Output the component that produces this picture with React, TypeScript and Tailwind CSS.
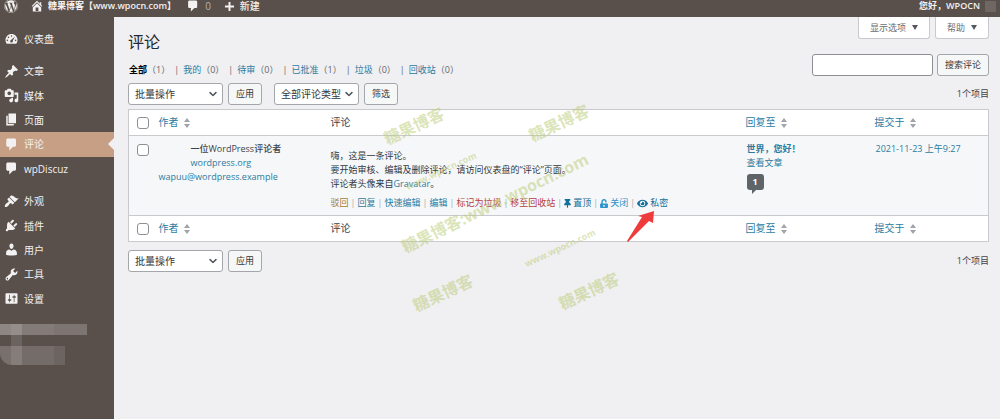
import React, { type ReactNode } from 'react';
import { FaEye, FaThumbtack, FaUnlockAlt, FaWordpress } from 'react-icons/fa';

const ICONS = {
  dashboard:
    'M3.76 17h12.48c1.1-1.37 1.76-3.11 1.76-5 0-4.42-3.58-8-8-8s-8 3.58-8 8c0 1.89.66 3.63 1.76 5zM10 5.5c.6 0 1 .45 1 1s-.4 1-1 1-1-.45-1-1 .4-1 1-1zM6 7.3c.6 0 1.1.45 1.1 1.1S6.6 9.5 6 9.5s-1.1-.5-1.1-1.1S5.4 7.3 6 7.3zm8.6.1L11.7 13c.4 1.1-.4 2.4-1.7 2.4s-2.1-1.3-1.6-2.5c.2-.5.6-.8 1-.9zM4.5 11.3c.6 0 1.1.45 1.1 1.1s-.5 1.1-1.1 1.1-1.1-.5-1.1-1.1.5-1.1 1.1-1.1zm11 0c.6 0 1.1.45 1.1 1.1s-.5 1.1-1.1 1.1-1.1-.5-1.1-1.1.5-1.1 1.1-1.1z',
  post: 'M10.44 3.02l1.82-1.82 6.36 6.35-1.83 1.82c-1.05-.68-2.48-.57-3.41.36l-.75.75c-.92.93-1.04 2.35-.35 3.41l-1.83 1.82-2.41-2.41-2.8 2.79c-.42.42-3.38 2.71-3.8 2.29s1.86-3.39 2.28-3.81l2.79-2.79L4.1 9.36l1.83-1.82c1.05.69 2.48.57 3.4-.36l.75-.75c.93-.92 1.05-2.35.36-3.41z',
  media:
    'M13 11V4c0-.55-.45-1-1-1h-1.67L9 1H5L3.67 3H2c-.55 0-1 .45-1 1v7c0 .55.45 1 1 1h10c.55 0 1-.45 1-1zM7 4.5c1.38 0 2.5 1.12 2.5 2.5S8.38 9.5 7 9.5 4.5 8.38 4.5 7 5.62 4.5 7 4.5zM14 6h5v10.5c0 1.38-1.12 2.5-2.5 2.5S14 17.88 14 16.5s1.12-2.5 2.5-2.5c.17 0 .34.02.5.05V9h-3V6zm-4 8.05V13h2v3.5c0 1.38-1.12 2.5-2.5 2.5S7 17.88 7 16.5 8.12 14 9.5 14c.17 0 .34.02.5.05z',
  page: 'M6 15V2h10v13H6zm-1 1h8v2H3V5h2v11z',
  comment:
    'M5 2h9c1.1 0 2 .9 2 2v7c0 1.1-.9 2-2 2h-2l-5 5v-5H5c-1.1 0-2-.9-2-2V4c0-1.1.9-2 2-2z',
  appearance:
    'M14.48 11.06L7.41 3.99l1.5-1.5c.5-.56 2.3-.47 3.51.32 1.21.8 1.43 1.28 2.91 2.1 1.18.64 2.45 1.26 4.45.85zm-.71.71L6.7 4.7 4.93 6.47c-.39.39-.39 1.02 0 1.41l1.06 1.06c.39.39.39 1.03 0 1.42-.6.6-1.43 1.11-2.21 1.69-.35.26-.7.53-1.01.84C1.43 14.23.4 16.08 1.4 17.07c.99 1 2.84-.03 4.18-1.36.31-.31.58-.66.85-1.02.57-.78 1.08-1.61 1.69-2.21.39-.39 1.02-.39 1.41 0l1.06 1.06c.39.39 1.02.39 1.41 0z',
  plugins:
    'M13.11 4.36L9.87 7.6 8 5.73l3.24-3.24c.35-.34 1.05-.2 1.56.32.52.51.66 1.21.31 1.55zm-8 1.77l.91-1.12 9.01 9.01-1.19.84c-.71.71-2.63 1.16-3.82 1.16H6.14L4.9 17.26c-.59.59-1.54.59-2.12 0-.59-.58-.59-1.53 0-2.12l1.24-1.24v-3.88c0-1.13.4-3.19 1.09-3.89zm7.26 3.97l3.24-3.24c.34-.35 1.04-.21 1.55.31.52.51.66 1.21.31 1.55l-3.24 3.25z',
  users:
    'M10 9.25c-2.27 0-2.73-3.44-2.73-3.44C7 4.02 7.82 2 9.97 2c2.16 0 2.98 2.02 2.71 3.81 0 0-.41 3.44-2.68 3.44zm0 2.57L12.72 10c2.39 0 4.52 2.33 4.52 4.53v2.49s-3.65 1.13-7.24 1.13c-3.65 0-7.24-1.13-7.24-1.13v-2.49c0-2.25 1.94-4.48 4.47-4.48z',
  tools:
    'M16.68 9.77c-1.34 1.34-3.3 1.67-4.95.99l-5.41 6.52c-.99.99-2.59.99-3.58 0s-.99-2.59 0-3.57l6.52-5.42c-.68-1.65-.35-3.61.99-4.95 1.28-1.28 3.12-1.62 4.72-1.06l-2.89 2.89 2.82 2.82 2.86-2.87c.53 1.58.18 3.39-1.08 4.65zM3.81 16.21c.4.39 1.04.39 1.43 0 .4-.4.4-1.04 0-1.43-.39-.4-1.03-.4-1.43 0-.39.39-.39 1.03 0 1.43z',
  settings:
    'M18 16V4c0-.55-.45-1-1-1H3c-.55 0-1 .45-1 1v12c0 .55.45 1 1 1h14c.55 0 1-.45 1-1zM8 11h1c.55 0 1 .45 1 1s-.45 1-1 1H8v1.5c0 .28-.22.5-.5.5s-.5-.22-.5-.5V13H6c-.55 0-1-.45-1-1s.45-1 1-1h1V5.5c0-.28.22-.5.5-.5s.5.22.5.5V11zm5-2h-1c-.55 0-1-.45-1-1s.45-1 1-1h1V5.5c0-.28.22-.5.5-.5s.5.22.5.5V7h1c.55 0 1 .45 1 1s-.45 1-1 1h-1v5.5c0 .28-.22.5-.5.5s-.5-.22-.5-.5V9z',
  home: 'M16 8.5l1.53 1.53-1.06 1.06L10 4.6l-6.47 6.49-1.06-1.06L10 2.5l4 4v-2h2v4zm-6-2.46l6 5.99V18H4v-5.97zM12 17v-5H8v5h4z',
  plus: 'M17 8.5v3h-5.5V17h-3v-5.5H3v-3h5.500V3h3v5.500z',
};

type IconName = keyof typeof ICONS;

function Icon({ name, className = 'size-[15px]' }: { name: IconName; className?: string }) {
  return (
    <svg viewBox="0 0 20 20" fill="currentColor" fillRule="evenodd" aria-hidden="true" className={`shrink-0 ${className}`}>
      <path d={ICONS[name]} />
    </svg>
  );
}

function TopBar() {
  return (
    <header className="flex h-[17px] items-center justify-between overflow-hidden bg-[#59504b] pr-1 pb-[5px] pl-1 text-[10px] leading-4 font-medium text-[#f3f1f1]">
      <nav className="flex items-center" aria-label="工具栏">
        <a href="#wp" aria-label="WordPress" className="mr-3">
          <FaWordpress className="size-[14px]" />
        </a>
        <a href="#site" className="mr-[10px] flex items-center gap-1 text-[9px] font-semibold">
          <Icon name="home" className="size-[14px]" />
          糖果博客【www.wpocn.com】
        </a>
        <a href="#comments" className="mr-3 flex items-center gap-[5px] text-[#b5afac]">
          <Icon name="comment" className="size-[14px] text-[#f3f1f1]" />0
        </a>
        <a href="#new" className="flex items-center gap-1">
          <Icon name="plus" className="size-[13px]" />
          新建
        </a>
      </nav>
      <a href="#profile" className="flex items-center gap-[5px] text-[9px] font-semibold">
        您好，WPOCN
        <span className="size-[11px] bg-[#6f6763]" />
      </a>
    </header>
  );
}

function MenuItem({ icon, label, current }: { icon: IconName; label: string; current?: boolean }) {
  return (
    <li className={current ? 'relative flex bg-[#c69f84]' : 'flex'}>
      <a href={`#${label}`} aria-current={current ? 'page' : undefined} className="flex h-full w-full items-center gap-[5px] pl-1">
        <Icon name={icon} />
        {label}
      </a>
      {current && (
        <svg viewBox="0 0 6 12" aria-hidden="true" className="absolute top-1/2 right-0 h-3 w-[6px] -translate-y-1/2 fill-[#f0eff1]">
          <path d="M6 0L0 6l6 6z" />
        </svg>
      )}
    </li>
  );
}

function Sidebar() {
  return (
    <aside className="w-[114px] shrink-0 bg-[#59504b] pt-[9px] text-[10px] leading-4 text-[#f3f1f1]">
      <nav aria-label="主菜单" className="flex flex-col gap-2">
        <ul className="grid h-[25px]">
          <MenuItem icon="dashboard" label="仪表盘" />
        </ul>
        <ul className="grid h-[122px] auto-rows-fr">
          <MenuItem icon="post" label="文章" />
          <MenuItem icon="media" label="媒体" />
          <MenuItem icon="page" label="页面" />
          <MenuItem icon="comment" label="评论" current />
          <MenuItem icon="comment" label="wpDiscuz" />
        </ul>
        <ul className="grid h-[122px] auto-rows-fr">
          <MenuItem icon="appearance" label="外观" />
          <MenuItem icon="plugins" label="插件" />
          <MenuItem icon="users" label="用户" />
          <MenuItem icon="tools" label="工具" />
          <MenuItem icon="settings" label="设置" />
        </ul>
      </nav>
      <div aria-hidden="true" className="mt-[13px]">
        <div className="flex h-[11px] w-[87px]">
          <span className="w-[11px] bg-[#8d8784]" />
          <span className="w-[11px] bg-[#948d89]" />
          <span className="w-[32px] bg-[#837b77]" />
          <span className="flex-1 bg-[#7d7571]" />
        </div>
        <div className="flex h-[11px] pl-[11px]">
          <span className="w-[11px] bg-[#6b635f]" />
        </div>
        <div className="flex h-[19px] w-[65px] overflow-hidden rounded-bl-[12px]">
          <span className="w-[11px] bg-[#77706d]" />
          <span className="w-[11px] bg-[#857d79]" />
          <span className="w-[32px] bg-[#746c68]" />
          <span className="flex-1 bg-[#6c6460]" />
        </div>
      </div>
    </aside>
  );
}

function MetaTab({ children }: { children: ReactNode }) {
  return (
    <button className="flex h-[22px] items-center gap-[6px] rounded-b-[3px] border border-t-0 border-[#c8cacd] bg-white px-[11px] text-[9px] text-[#6a6d71]">
      {children}
      <svg viewBox="0 0 6 5" aria-hidden="true" className="h-[5px] w-[6px] fill-[#55595e]">
        <path d="M0 0h6L3 5z" />
      </svg>
    </button>
  );
}

function Button({ children }: { children: ReactNode }) {
  return (
    <button className="h-[22px] rounded-[3px] border border-[#a3a6aa] bg-[#f6f7f7] px-[7px] text-[9px] text-[#32373c]">
      {children}
    </button>
  );
}

function Select({ label, value, width }: { label: string; value: string; width: string }) {
  return (
    <div className={`relative ${width}`}>
      <select aria-label={label} className="block h-[22px] w-full appearance-none rounded-[3px] border border-[#a3a6aa] bg-white pl-[6px] text-[10px] text-[#32373c]">
        <option>{value}</option>
      </select>
      <svg viewBox="0 0 8 5" aria-hidden="true" className="pointer-events-none absolute top-1/2 right-[6px] h-[5px] w-2 -translate-y-1/2 fill-none stroke-[#50575e] stroke-[1.5]">
        <path d="M.6.6L4 4 7.400.6" />
      </svg>
    </div>
  );
}

const VIEWS = [
  { label: '全部', count: 1 },
  { label: '我的', count: 0 },
  { label: '待审', count: 0 },
  { label: '已批准', count: 1 },
  { label: '垃圾', count: 0 },
  { label: '回收站', count: 0 },
];

function Views() {
  return (
    <ul className="flex items-center text-[9px] leading-[14px] text-[#63686e]">
      {VIEWS.map((view, i) => (
        <li key={view.label} className="flex">
          {i > 0 && <span className="mx-1">|</span>}
          <a href={`#${view.label}`} className={i === 0 ? 'font-bold text-black' : 'text-[#2b7ba2]'}>
            {view.label}
          </a>
          <span>（{view.count}）</span>
        </li>
      ))}
    </ul>
  );
}

function SortLink({ children }: { children: ReactNode }) {
  return (
    <a href="#sort" className="flex items-center gap-[5px] text-[#2b7ba2]">
      {children}
      <svg viewBox="0 0 6 10" aria-hidden="true" className="h-[10px] w-[6px] fill-[#a0a3a7]">
        <path d="M3 0l3 4H0zM0 6h6l-3 4z" />
      </svg>
    </a>
  );
}

function CheckBox({ label }: { label: string }) {
  return (
    <input type="checkbox" aria-label={label} className="block size-3 appearance-none rounded-[3px] border border-[#8c8f94] bg-white" />
  );
}

function HeadingRow({ label }: { label: string }) {
  return (
    <tr className="h-[26px] bg-white text-left text-[10px] text-[#3c434a]">
      <th className="w-[30px] pl-2 font-normal">
        <CheckBox label={label} />
      </th>
      <th className="w-[20%] font-normal">
        <SortLink>作者</SortLink>
      </th>
      <th className="font-normal">评论</th>
      <th className="w-[129px] font-normal">
        <SortLink>回复至</SortLink>
      </th>
      <th className="w-[114px] font-normal">
        <SortLink>提交于</SortLink>
      </th>
    </tr>
  );
}

const ACTIONS: { label: string; color: string; icon?: ReactNode }[] = [
  { label: '驳回', color: 'text-[#a27a3a]' },
  { label: '回复', color: 'text-[#2b7ba2]' },
  { label: '快速编辑', color: 'text-[#2b7ba2]' },
  { label: '编辑', color: 'text-[#2b7ba2]' },
  { label: '标记为垃圾', color: 'text-[#b3403f]' },
  { label: '移至回收站', color: 'text-[#b3403f]' },
  { label: '置顶', color: 'text-[#12709c]', icon: <FaThumbtack className="h-[9px] w-[7px]" /> },
  { label: '关闭', color: 'text-[#2b93cb]', icon: <FaUnlockAlt className="h-[9px] w-2" /> },
  { label: '私密', color: 'text-[#12709c]', icon: <FaEye className="size-[11px]" /> },
];

function RowActions() {
  return (
    <div className="mt-[5px] flex items-center gap-[2px] text-[9px] leading-[14px]">
      {ACTIONS.map((action, i) => (
        <React.Fragment key={action.label}>
          {i > 0 && <span className="text-[#a7aaad]">|</span>}
          <a href={`#${action.label}`} className={`flex items-center gap-[2px] whitespace-nowrap ${action.color}`}>
            {action.icon}
            {action.label}
          </a>
        </React.Fragment>
      ))}
    </div>
  );
}

function CommentsTable() {
  return (
    <table className="w-full table-fixed border-collapse border border-[#c8cacd]">
      <thead className="border-b border-[#c8cacd]">
        <HeadingRow label="全选" />
      </thead>
      <tbody>
        <tr className="h-[80px] bg-[#f6f7f8] align-top text-[9px] leading-[14px] text-[#50575e]">
          <td className="pt-2 pl-2">
            <CheckBox label="选择评论" />
          </td>
          <td className="pt-[6px]">
            <strong className="block pl-8 font-medium text-[#3c434a]">一位WordPress评论者</strong>
            <a href="#author" className="block pl-8 text-[#2b7ba2]">wordpress.org</a>
            <a href="#mail" className="block text-[#2b7ba2]">wapuu@wordpress.example</a>
          </td>
          <td className="pt-[13px] text-[#32373c]">
            <p>嗨，这是一条评论。</p>
            <p>要开始审核、编辑及删除评论，请访问仪表盘的“评论”页面。</p>
            <p>
              评论者头像来自<a href="#gravatar" className="text-[#2b7ba2]">Gravatar</a>。
            </p>
            <RowActions />
          </td>
          <td className="pt-[6px] pl-px text-[#2b7ba2]">
            <a href="#post" className="block font-bold">世界，您好！</a>
            <a href="#view" className="block">查看文章</a>
            <a href="#replies" className="relative mt-1 flex h-4 w-[17px] items-center justify-center rounded-[3px] bg-[#5f6468] font-bold text-white">
              1
              <svg viewBox="0 0 5 4" aria-hidden="true" className="absolute top-full left-1 h-1 w-[5px] fill-[#5f6468]">
                <path d="M1 0h4L1 4z" />
              </svg>
            </a>
          </td>
          <td className="pt-[6px]">
            <a href="#date" className="pl-px text-[#2b7ba2]">2021-11-23 上午9:27</a>
          </td>
        </tr>
      </tbody>
      <tfoot className="border-t border-[#c8cacd]">
        <HeadingRow label="全选（底部）" />
      </tfoot>
    </table>
  );
}

function Stamp({ text, className }: { text: string; className: string }) {
  return (
    <span className={`absolute -translate-x-1/2 -translate-y-1/2 font-bold whitespace-nowrap text-[#b9ca75]/50 ${className}`}>
      {text}
    </span>
  );
}

function Overlay() {
  return (
    <div aria-hidden="true" className="pointer-events-none absolute inset-0 overflow-hidden">
      <Stamp text="糖果博客" className="top-[126px] left-[414px] -rotate-[25deg] text-[16px]" />
      <Stamp text="糖果博客" className="top-[123px] left-[559px] -rotate-[25deg] text-[16px]" />
      <Stamp text="糖果博客:www.wpocn.com" className="top-[203px] left-[495px] -rotate-[26deg] text-[16px]" />
      <Stamp text="www.wpocn.com" className="top-[171px] left-[441px] -rotate-[25deg] text-[9px]" />
      <Stamp text="www.wpocn.com" className="top-[248px] left-[560px] -rotate-[25deg] text-[9px]" />
      <Stamp text="糖果博客" className="top-[293px] left-[443px] -rotate-[25deg] text-[16px]" />
      <Stamp text="糖果博客" className="top-[291px] left-[589px] -rotate-[25deg] text-[16px]" />
      <svg viewBox="0 0 28 32" className="absolute top-[211px] left-[627px] h-8 w-7 fill-[#ee3b3b]">
        <path d="M27 0l-1 12-4-2L1 31 0 30 15 6l-4-1z" />
      </svg>
    </div>
  );
}

export default function App() {
  return (
    <div className="relative flex min-h-screen flex-col bg-[#f0eff1] font-['Open_Sans','Noto_Sans_CJK_SC',sans-serif]">
      <TopBar />
      <div className="flex flex-1">
        <Sidebar />
        <main className="min-w-0 flex-1 pr-[11px] pl-[14px] text-[#3c434a]">
          <div className="flex items-start justify-between">
            <h1 className="pt-[14px] text-[16px] leading-[23px] text-[#23282d]">评论</h1>
            <div className="flex gap-[5px]">
              <MetaTab>显示选项</MetaTab>
              <MetaTab>帮助</MetaTab>
            </div>
          </div>
          <div className="flex h-[29px] items-start justify-between">
            <div className="pt-[9px] pl-px">
              <Views />
            </div>
            <form className="flex gap-1">
              <input type="search" aria-label="搜索评论" className="h-[22px] w-[121px] rounded-[3px] border border-[#8c8f94] bg-white px-1 text-[10px]" />
              <Button>搜索评论</Button>
            </form>
          </div>
          <div className="flex items-center justify-between pb-1">
            <div className="flex gap-[5px]">
              <Select label="批量操作" value="批量操作" width="w-[95px]" />
              <Button>应用</Button>
              <div className="ml-[7px] flex gap-[5px]">
                <Select label="评论类型" value="全部评论类型" width="w-[85px]" />
                <Button>筛选</Button>
              </div>
            </div>
            <span className="text-[9px]">1个项目</span>
          </div>
          <CommentsTable />
          <div className="flex items-center justify-between pt-2">
            <div className="flex gap-[5px]">
              <Select label="批量操作（底部）" value="批量操作" width="w-[95px]" />
              <Button>应用</Button>
            </div>
            <span className="text-[9px]">1个项目</span>
          </div>
        </main>
      </div>
      <Overlay />
    </div>
  );
}
